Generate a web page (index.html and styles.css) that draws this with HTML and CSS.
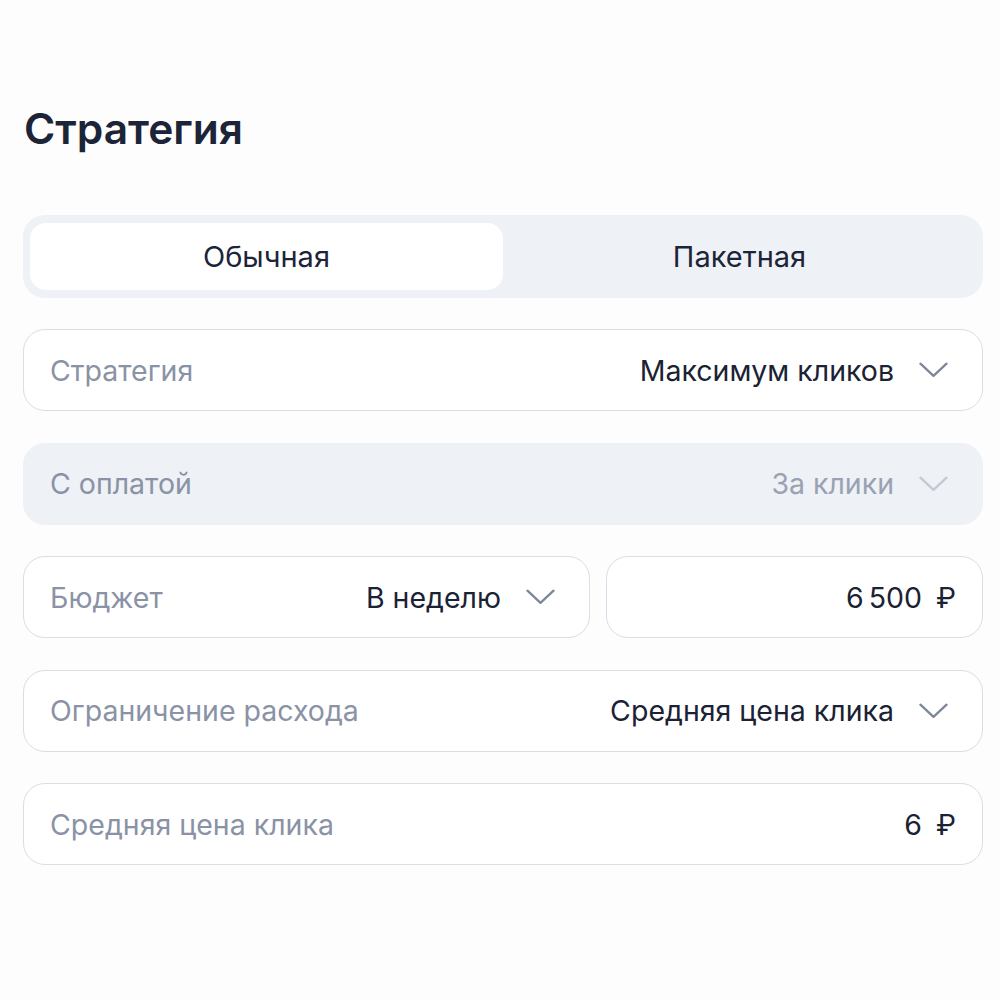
FILE: index.html
```html
<!DOCTYPE html>
<html lang="ru">
<head>
<meta charset="utf-8">
<link rel="stylesheet" href="styles.css">
</head>
<body>
<div class="page">
  <h1 class="title">Стратегия</h1>
  <div class="tabs">
    <div class="tab tab-active">Обычная</div>
    <div class="tab">Пакетная</div>
  </div>
  <div class="field">
    <span class="label">Стратегия</span>
    <span class="value">Максимум кликов</span>
    <svg class="chev" viewBox="0 0 30 16"><path d="M1.5 1.5 L15 14 L28.5 1.5"/></svg>
  </div>
  <div class="field field-disabled">
    <span class="label">С оплатой</span>
    <span class="value">За клики</span>
    <svg class="chev" viewBox="0 0 30 16"><path d="M1.5 1.5 L15 14 L28.5 1.5"/></svg>
  </div>
  <div class="row">
    <div class="field field-left">
      <span class="label">Бюджет</span>
      <span class="value">В неделю</span>
      <svg class="chev" viewBox="0 0 30 16"><path d="M1.5 1.5 L15 14 L28.5 1.5"/></svg>
    </div>
    <div class="field field-right">
      <span class="value num">6&#8239;500</span>
      <span class="rub">₽</span>
    </div>
  </div>
  <div class="field">
    <span class="label">Ограничение расхода</span>
    <span class="value">Средняя цена клика</span>
    <svg class="chev" viewBox="0 0 30 16"><path d="M1.5 1.5 L15 14 L28.5 1.5"/></svg>
  </div>
  <div class="field field-num">
    <span class="label">Средняя цена клика</span>
    <span class="value num">6</span>
    <span class="rub">₽</span>
  </div>
</div>
</body>
</html>
```

FILE: styles.css
```css
* { box-sizing: border-box; }
body {
  margin: 0;
  background: #fdfdfe;
  font-family: Inter, "Noto Sans", sans-serif;
  color: #1b2336;
}
.page {
  padding: 96px 17px 0 23px;
  display: flex;
  flex-direction: column;
}
.title {
  margin: 0 0 0 1px;
  font-size: 42.5px;
  font-weight: 600;
  line-height: 66px;
  color: #1c2438;
  letter-spacing: 0;
}
.tabs {
  margin-top: 53px;
  height: 83px;
  background: #eef1f6;
  border-radius: 22px;
  padding: 8px 7px;
  display: flex;
}
.tab {
  flex: 1;
  display: flex;
  align-items: center;
  justify-content: center;
  font-size: 29px;
  color: #1c2438;
  border-radius: 16px;
}
.tab-active {
  background: #ffffff;
}
.field {
  margin-top: 31px;
  height: 82px;
  border: 1.5px solid #d9dde6;
  border-radius: 22px;
  background: #fff;
  display: flex;
  align-items: center;
  padding: 0 34px 0 26px;
  font-size: 28.5px;
}
.field + .field, .row + .field, .field + .row { margin-top: 31.5px; }
.field-disabled {
  background: #eef1f6;
  border-color: #eef1f6;
}
.label {
  color: #8a92a6;
  flex: 1;
}
.value {
  color: #1a2233;
}
.field-disabled .value {
  color: #9aa1b3;
}
.chev {
  width: 29px;
  height: 16px;
  margin-left: 25px;
  fill: none;
  stroke: #7d869b;
  stroke-width: 2.4;
  stroke-linecap: round;
  stroke-linejoin: round;
}
.field-disabled .chev {
  stroke: #c3c8d4;
}
.row {
  display: flex;
  gap: 16px;
}
.row .field {
  margin-top: 0;
}
.field-left {
  width: 567px;
}
.field-right {
  flex: 1;
  justify-content: flex-end;
  padding-right: 26px;
}
.rub {
  margin-left: 14px;
  color: #1a2233;
}
.field-num {
  padding-right: 26px;
}
.num { margin-left: auto; }
```
